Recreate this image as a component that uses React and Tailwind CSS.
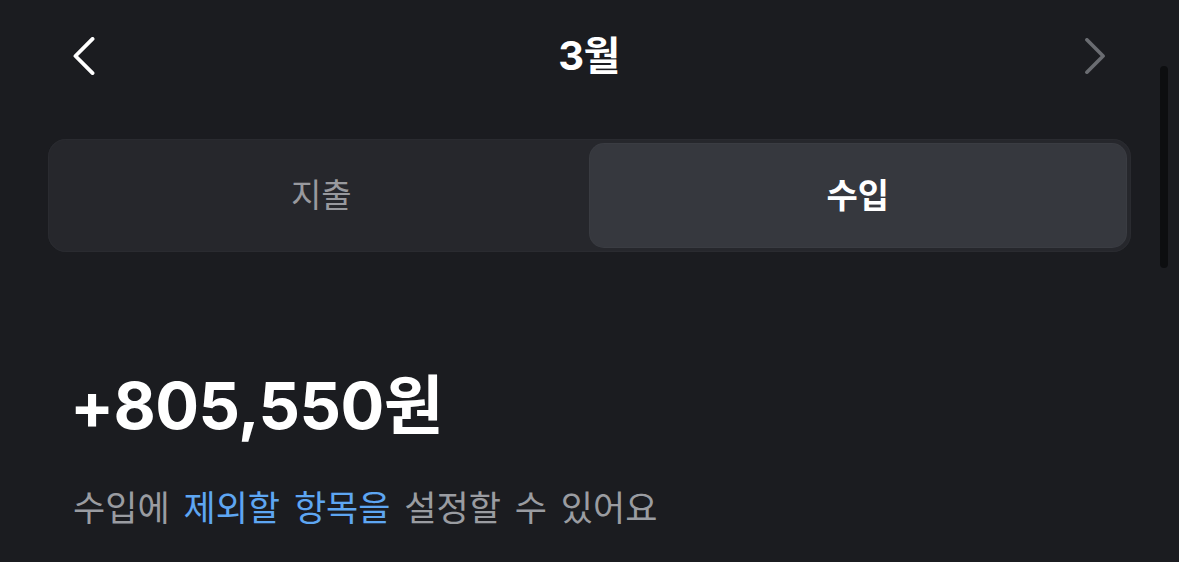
const font = {
  fontFamily: '"Inter", "Noto Sans CJK KR", sans-serif',
};

const ChevronLeft = ({ className }) => (
  <svg viewBox="0 0 24 40" className={className} fill="none" stroke="currentColor" strokeWidth="4" strokeLinecap="round" strokeLinejoin="round">
    <path d="M21 2 L3 20 L21 38" />
  </svg>
);

const ChevronRight = ({ className }) => (
  <svg viewBox="0 0 24 40" className={className} fill="none" stroke="currentColor" strokeWidth="4" strokeLinecap="round" strokeLinejoin="round">
    <path d="M3 2 L21 20 L3 38" />
  </svg>
);

const App = () => {
  return (
    <div className="relative h-[562px] w-full overflow-hidden bg-[#1b1c20]" style={font}>
      {/* month header */}
      <div className="flex h-[112px] items-center justify-between pl-[72px] pr-[73px]">
        <div className="flex w-[120px] justify-start">
          <ChevronLeft className="h-[38px] w-[24px] text-white" />
        </div>
        <h1 className="text-[40px] font-bold leading-none tracking-[-0.5px] text-white">3월</h1>
        <div className="flex w-[120px] justify-end">
          <ChevronRight className="h-[36px] w-[22px] text-[#6a6c71]" />
        </div>
      </div>

      {/* expense / income toggle */}
      <div className="mx-[48px] mt-[27px] grid h-[113px] grid-cols-2 rounded-[18px] bg-[#26272c] p-[5px] shadow-[inset_0_0_0_1px_#2a2b30]">
        <button className="flex items-center justify-center rounded-[14px] text-[33px] font-normal text-[#98999e]">
          지출
        </button>
        <button className="flex items-center justify-center rounded-[14px] bg-[#36383e] text-[34px] font-semibold text-white shadow-[0_0_0_1px_#3a3c42]">
          수입
        </button>
      </div>

      {/* total */}
      <div className="px-[73px]">
        <div className="-ml-[3px] mt-[121px] text-[65px] font-bold leading-none tracking-[-0.6px] text-white">
          +805,550원
        </div>
        <p
          className="mt-[50px] text-[35px] leading-none text-[#9a9ca1] [word-spacing:6px]"
          style={{ fontFamily: '"Noto Sans CJK KR", sans-serif' }}
        >
          수입에 <span className="text-[#5ea6f2]">제외할 항목을</span> 설정할 수 있어요
        </p>
      </div>

      {/* scrollbar */}
      <div className="absolute right-[11px] top-[66px] h-[202px] w-[8px] rounded-full bg-[#0d0e10]" />
    </div>
  );
};

export default App;
